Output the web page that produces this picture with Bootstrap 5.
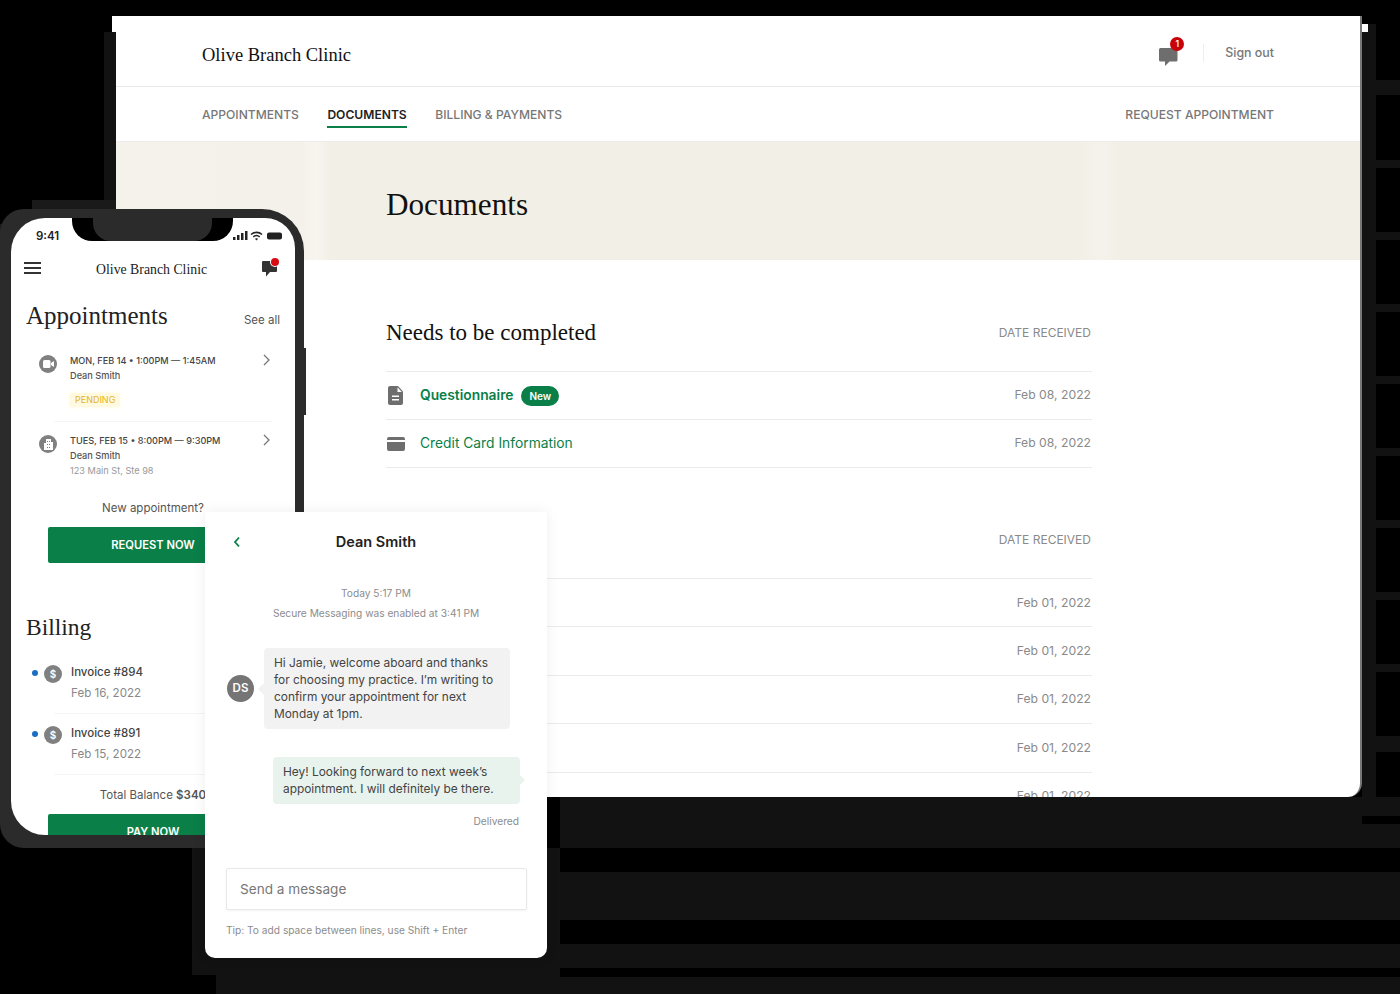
<!DOCTYPE html>
<html lang="en">
<head>
<meta charset="UTF-8">
<meta name="viewport" content="width=device-width, initial-scale=1.0">
<title>Olive Branch Clinic</title>
<link href="https://cdn.jsdelivr.net/npm/bootstrap@5.3.0/dist/css/bootstrap.min.css" rel="stylesheet">
<style>
    body { margin: 0; background: #000; font-family: Inter, "Liberation Sans", sans-serif; color: #444; overflow: hidden; }
    .stage { position: relative; width: 1400px; height: 994px; overflow: hidden; }
    .serif { font-family: "Liberation Serif", serif; font-weight: 400; color: #111; }

    /* backdrop: the banded drop shadow of the source image */
    .shade { position: absolute; background: #121212; }
    .shade-bands { left: 560px; top: 797px; width: 840px; height: 197px; background: linear-gradient(to bottom, #121212 0 51px, #000 51px 75px, #121212 75px 123px, #000 123px 147px, #121212 147px 171px, #000 171px 180px, #121212 180px); }
    .shade-chat { left: 192px; top: 848px; width: 368px; height: 127px; }
    .shade-chat-low { left: 216px; top: 975px; width: 344px; height: 19px; }
    .shade-right { left: 1362px; top: 24px; width: 14px; height: 784px; }
    .shade-tick-top { left: 1376px; top: 80px; width: 24px; height: 15px; }
    .shade-ticks { left: 1376px; top: 160px; width: 24px; height: 584px; background: repeating-linear-gradient(to bottom, #121212 0 8px, #000 8px 72px); }
    .shade-tick-last { left: 1376px; top: 744px; width: 24px; height: 8px; }
    .shade-ticks-low { left: 1362px; top: 797px; width: 38px; height: 51px; background: linear-gradient(to bottom, #121212 0 19px, #000 19px 27px, #121212 27px); }
    .shade-left { left: 104px; top: 32px; width: 12px; height: 180px; }
    .shade-phone { left: 0; top: 200px; width: 120px; height: 40px; background: #1a1a1a; clip-path: polygon(32px 0, 120px 0, 120px 40px, 0 40px, 0 24px, 8px 24px, 8px 16px, 32px 16px); }
    .desk-nub-l { position: absolute; left: 112px; top: 16px; width: 6px; height: 16px; background: #fff; }
    .desk-nub-r { position: absolute; left: 1360px; top: 24px; width: 8px; height: 8px; background: #fff; }

    /* desktop window */
    .desk { position: absolute; left: 116px; top: 16px; width: 1246px; height: 781px; background: #fff; overflow: hidden; border-right: 2px solid #777; border-bottom-right-radius: 14px; }
    .desk-head { height: 71px; padding: 2px 86px 0 86px; border-bottom: 1px solid #e9e9e9; }
    .desk-logo { font-size: 18.5px; margin-top: 7px; }
    .head-tools { margin-top: 2px; }
    .sign-out { font-size: 12.4px; font-weight: 500; color: #777; margin-left: 1px; }
    .head-rule { width: 1px; height: 18px; background: #eee; margin: 0 20px 0 24px; }
    .msg-wrap { position: relative; width: 20px; height: 22px; }
    .msg-count { position: absolute; left: 11px; top: -5px; width: 14px; height: 14px; border-radius: 50%; background: #c8000a; color: #fff; font-size: 8.5px; line-height: 14px; text-align: center; font-weight: 600; }
    .desk-nav { height: 55px; padding: 0 86px 0 86px; border-bottom: 1px solid #ececec; gap: 28.5px; }
    .desk-nav a { font-size: 12.1px; font-weight: 500; color: #777; text-decoration: none; text-transform: uppercase; line-height: 22px; padding-top: 2px; }
    .desk-nav a.on { color: #222; font-weight: 600; box-shadow: 0 2px 0 #0a7f48; }
    .banner { height: 118px; padding: 7px 0 0 270px; background: linear-gradient(90deg, #f5f2ec 0, #f4f1ea 185px, #f7f5ef 200px, #f2efe6 215px, #f2efe6 960px, #f4f2eb 985px, #f2efe6 1005px); }
    .banner h1 { font-size: 31.2px; margin: 0; }
    .doc-area { padding: 0 0 0 270px; width: 976px; }
    .doc-head { font-size: 12px; color: #8a8a8a; text-transform: uppercase; padding-right: 1px; }
    .doc-title { font-size: 23px; margin: 0; }
    .doc-top { height: 111px; padding-top: 35px; }
    .doc-mid { height: 110px; padding-top: 34px; }
    .doc-list { border-top: 1px solid #ebebeb; }
    .doc-row { height: 48.4px; border-bottom: 1px solid #ebebeb; font-size: 12.2px; color: #8a8a8a; padding-right: 1px; }
    .doc-row.first-set { height: 48px; }
    .doc-link { font-size: 13.8px; color: #0a7f48; text-decoration: none; }
    .doc-link.fw { font-weight: 600; }
    .pill-new { background: #0a7f48; font-size: 10px; font-weight: 600; padding: 5px 8px; }
    .doc-ico { width: 34px; padding-left: 1px; }
    .doc-ico svg.file-ico { margin-left: 1px; }

    /* phone */
    .phone { position: absolute; left: 0; top: 209px; width: 304px; height: 639px; background: #2b2b2b; border-radius: 24px 42px 0 24px; padding: 9px 9px 13px 11px; }
    .phone-key { position: absolute; left: 304px; top: 348px; width: 2px; height: 67px; background: #2b2b2b; }
    .screen { position: relative; height: 100%; background: #fff; border-radius: 34px 30px 0 34px; overflow: hidden; padding: 0 15px; }
    .notch { position: absolute; left: 61px; top: 0; width: 161px; height: 23px; background: #000; border-radius: 0 0 20px 20px; }
    .notch i { display: block; margin-left: 21px; width: 119px; height: 23px; background: #2b2b2b; border-radius: 0 0 18px 18px; }
    .status { height: 34px; padding: 10px 0 0 10px; font-size: 11.5px; font-weight: 600; color: #222; }
    .signal { margin: 2px -3px 0 0; }
    .top-bar { height: 32px; }
    .burger { width: 17px; margin-left: -2px; }
    .burger i { display: block; height: 2px; background: #333; margin-bottom: 3px; }
    .phone-logo { font-size: 13.8px; color: #222; margin: 4px 0 0 55px; }
    .msg-dot { position: relative; width: 16px; height: 16px; margin-right: 2px; }
    .msg-dot b { position: absolute; left: 9px; top: -2px; width: 8px; height: 8px; border-radius: 50%; background: #d80c14; box-shadow: 0 0 0 1px #fff; }
    .phone-h2 { font-size: 25px; line-height: 32px; margin: 0; color: #222; }
    .phone-h2.billing { font-size: 23.5px; margin-top: 48px; }
    .see-all { font-size: 11.5px; color: #555; padding-bottom: 3px; }
    .round-ico { flex: none; width: 18px; height: 18px; border-radius: 50%; background: #808080; color: #fff; font-size: 10px; font-weight: 600; }
    .appt-ico { margin: 2px 8px 0 0; }
    .appt-row { padding-left: 13px; padding-right: 9px; }
    .appt-row.one { margin-top: 21px; }
    .appt-row.two { margin-top: 11px; }
    .appt-text { padding-left: 5px; }
    .appt-time { font-size: 9.15px; font-weight: 500; color: #444; line-height: 15px; }
    .appt-name { font-size: 9.2px; font-weight: 500; color: #555; line-height: 15px; }
    .appt-addr { font-size: 9.2px; color: #999; line-height: 15px; }
    .appt-chev { margin-top: 1px; }
    .tag-pending { display: inline-block; margin-top: 10px; font-size: 9px; line-height: 14px; padding: 0 5px; color: #e6b422; background: #fffadf; box-shadow: 0 0 4px #fffadf; }
    .soft-line { height: 1px; background: #f5f5f5; margin: 12px 8px 0 28px; }
    .phone-note { font-size: 11.5px; color: #555; text-align: center; width: 254px; }
    .note-new { margin-top: 22px; }
    .note-total { margin-top: 12px; }
    .btn-clinic { display: block; width: 210px; margin: 10px 0 0 22px; background: #0a7f48; color: #fff; font-size: 11.2px; font-weight: 600; border: 0; border-radius: 2px; height: 36px; line-height: 36px; padding: 0; text-align: center; }
    .btn-clinic.pay { margin-top: 9px; }
    .inv-row { margin-left: 6px; }
    .inv-row.one { margin-top: 21px; }
    .inv-row.two { margin-top: 11px; }
    .blue-dot { flex: none; width: 6px; height: 6px; border-radius: 50%; background: #1a6fc4; margin: 6px 6px 0 0; }
    .inv-ico { margin: 1px 9px 0 0; }
    .inv-name { font-size: 11.5px; font-weight: 500; color: #444; line-height: 16px; }
    .inv-date { font-size: 11.6px; color: #888; line-height: 16px; margin-top: 5px; }

    /* chat */
    .chat { position: absolute; left: 205px; top: 512px; width: 342px; height: 446px; background: #fff; border-radius: 3px 3px 10px 10px; box-shadow: 0 0 14px rgba(0,0,0,.07); display: flex; flex-direction: column; }
    .chat-head { height: 60px; flex: none; position: relative; font-size: 14.5px; font-weight: 600; color: #222; }
    .chat-back { position: absolute; left: 28px; top: 24px; }
    .chat-meta { font-size: 10.2px; color: #8c8c8c; line-height: 14px; }
    .meta-today { margin-top: 14px; }
    .meta-secure { margin-top: 6px; }
    .meta-delivered { margin: 10px 28px 0 0; }
    .meta-tip { margin: 13px 0 21px 21px; }
    .bubble { position: relative; font-size: 11.9px; line-height: 17px; color: #444; border-radius: 4px; margin-top: 28px; }
    .bubble-in { width: 246px; margin-left: 59px; background: #f2f2f2; padding: 5.5px 10px 7px; }
    .bubble-in::before { content: ""; position: absolute; left: -6px; top: 35px; border: 6px solid transparent; border-left: 0; border-right-color: #f2f2f2; }
    .bubble-out { width: 247px; margin-left: 68px; background: #e8f3ed; padding: 6.5px 10px 6.5px; }
    .bubble-out::after { content: ""; position: absolute; right: -5px; top: 17px; border: 6px solid transparent; border-right: 0; border-left-color: #e8f3ed; }
    .avatar { position: absolute; left: 22px; top: 103px; width: 27px; height: 27px; border-radius: 50%; background: #757575; color: #fff; font-size: 11.5px; font-weight: 600; }
    .chat-input { width: 301px; height: 42px; margin-left: 21px; border: 1px solid #e8e8e8; border-radius: 2px; padding: 0 13px; font-size: 13.6px; box-shadow: 0 1px 3px rgba(0,0,0,.05); }
    .chat-input::placeholder { color: #777; }
</style>
</head>
<body>
<div class="stage">
    <!-- backdrop -->
    <div class="shade shade-bands"></div>
    <div class="shade shade-chat"></div>
    <div class="shade shade-chat-low"></div>
    <div class="shade shade-right"></div>
    <div class="shade shade-tick-top"></div>
    <div class="shade shade-ticks"></div>
    <div class="shade shade-tick-last"></div>
    <div class="shade shade-ticks-low"></div>
    <div class="shade shade-left"></div>
    <div class="shade shade-phone"></div>
    <div class="desk-nub-l"></div>
    <div class="desk-nub-r"></div>

    <!-- Desktop window -->
    <div class="desk">
        <div class="desk-head d-flex align-items-center justify-content-between">
            <div class="serif desk-logo">Olive Branch Clinic</div>
            <div class="head-tools d-flex align-items-center">
                <div class="msg-wrap">
                    <svg width="20" height="22" viewBox="0 0 20 22"><path fill="#6e6e6e" d="M1.500 3h15.500a1.500 1.500 0 0 1 1.500 1.500V15a1.500 1.500 0 0 1-1.500 1.500H10.500L6 21v-4.500H1.500A1.500 1.500 0 0 1 0 15V4.500A1.500 1.500 0 0 1 1.500 3z"/></svg>
                    <span class="msg-count">1</span>
                </div>
                <span class="head-rule"></span>
                <span class="sign-out">Sign out</span>
            </div>
        </div>
        <nav class="desk-nav d-flex align-items-center">
            <a href="#">Appointments</a>
            <a href="#" class="on">Documents</a>
            <a href="#">Billing &amp; Payments</a>
            <a href="#" class="ms-auto">Request Appointment</a>
        </nav>
        <div class="banner d-flex align-items-center">
            <h1 class="serif">Documents</h1>
        </div>
        <div class="doc-area">
            <div class="doc-top d-flex align-items-center justify-content-between">
                <h2 class="serif doc-title">Needs to be completed</h2>
                <span class="doc-head">Date received</span>
            </div>
            <div class="doc-list">
                <div class="doc-row first-set d-flex align-items-center justify-content-between">
                    <div class="d-flex align-items-center">
                        <span class="doc-ico">
                            <svg width="16" height="19" viewBox="0 0 16 19" class="d-block file-ico"><path fill="#6e6e6e" d="M2 0h8l5 5.500V17a2 2 0 0 1-2 2H2a2 2 0 0 1-2-2V2a2 2 0 0 1 2-2z"/><path fill="#fff" d="M9.500 1.200V6h4.300zM4 9.500h7v1.500H4zM4 13h7v1.500H4z"/></svg>
                        </span>
                        <a href="#" class="doc-link fw">Questionnaire</a>
                        <span class="badge rounded-pill pill-new ms-2">New</span>
                    </div>
                    <span>Feb 08, 2022</span>
                </div>
                <div class="doc-row first-set d-flex align-items-center justify-content-between">
                    <div class="d-flex align-items-center">
                        <span class="doc-ico">
                            <svg width="18" height="14" viewBox="0 0 18 14" class="d-block"><path fill="#6e6e6e" d="M2 0h14a2 2 0 0 1 2 2v10a2 2 0 0 1-2 2H2a2 2 0 0 1-2-2V2a2 2 0 0 1 2-2z"/><path fill="#fff" d="M0 3h18v2H0z"/></svg>
                        </span>
                        <a href="#" class="doc-link">Credit Card Information</a>
                    </div>
                    <span>Feb 08, 2022</span>
                </div>
            </div>
            <div class="doc-mid d-flex align-items-center justify-content-end">
                <span class="doc-head">Date received</span>
            </div>
            <div class="doc-list">
                <div class="doc-row d-flex align-items-center justify-content-end"><span>Feb 01, 2022</span></div>
                <div class="doc-row d-flex align-items-center justify-content-end"><span>Feb 01, 2022</span></div>
                <div class="doc-row d-flex align-items-center justify-content-end"><span>Feb 01, 2022</span></div>
                <div class="doc-row d-flex align-items-center justify-content-end"><span>Feb 01, 2022</span></div>
                <div class="doc-row d-flex align-items-center justify-content-end"><span>Feb 01, 2022</span></div>
            </div>
        </div>
    </div>

    <!-- Phone -->
    <div class="phone-key"></div>
    <div class="phone">
        <div class="screen">
            <div class="notch"><i></i></div>
            <div class="status d-flex justify-content-between">
                <span>9:41</span>
                <svg class="signal" width="50" height="12" viewBox="0 0 50 12">
                    <path fill="#222" d="M0 7h2.500v3H0zM4 5h2.500v5H4zM8 3h2.500v7H8zM12 1h2.500v9H12z"/>
                    <path fill="none" stroke="#222" stroke-width="1.600" d="M18 4.500c3-2.800 8-2.800 11 0M20.300 6.800c1.800-1.500 4.600-1.500 6.400 0"/>
                    <path fill="#222" d="M23.500 10.500l-1.600-1.800c1-.7 2.200-.7 3.200 0z"/>
                    <rect x="34" y="2.500" width="15" height="7" rx="2" fill="#222"/>
                </svg>
            </div>
            <div class="top-bar d-flex align-items-center">
                <div class="burger"><i></i><i></i><i class="mb-0"></i></div>
                <div class="serif phone-logo flex-grow-1">Olive Branch Clinic</div>
                <div class="msg-dot">
                    <svg width="16" height="17" viewBox="0 0 16 17" class="d-block"><path fill="#333" d="M1 1h13a1 1 0 0 1 1 1v9a1 1 0 0 1-1 1H8l-4 4.500V12H1a1 1 0 0 1-1-1V2a1 1 0 0 1 1-1z"/></svg>
                    <b></b>
                </div>
            </div>
            <div class="d-flex align-items-end justify-content-between mt-3">
                <h2 class="serif phone-h2">Appointments</h2>
                <a class="see-all text-decoration-none" href="#">See all</a>
            </div>
            <div class="appt-row one d-flex">
                <span class="round-ico appt-ico d-flex align-items-center justify-content-center">
                    <svg width="11" height="8" viewBox="0 0 11 8"><rect width="7.500" height="8" rx="1.500" fill="#fff"/><path fill="#fff" d="M8 3l3-2v6L8 5z"/></svg>
                </span>
                <div class="flex-grow-1 appt-text">
                    <div class="appt-time">MON, FEB 14 • 1:00PM — 1:45AM</div>
                    <div class="appt-name">Dean Smith</div>
                    <span class="tag-pending">PENDING</span>
                </div>
                <svg class="appt-chev" width="8" height="12" viewBox="0 0 8 12"><path fill="none" stroke="#777" stroke-width="1.300" d="M1 1l5 5-5 5"/></svg>
            </div>
            <div class="soft-line"></div>
            <div class="appt-row two d-flex">
                <span class="round-ico appt-ico d-flex align-items-center justify-content-center">
                    <svg width="9" height="11" viewBox="0 0 9 11"><path fill="#fff" d="M2 0h5v3h2v8H0V4h2z"/><path fill="#808080" d="M3 2h1v1H3zM5 2h1v1H5zM3 5h1v1H3zM5 5h1v1H5zM3 8h1v1H3zM5 8h1v1H5z"/></svg>
                </span>
                <div class="flex-grow-1 appt-text">
                    <div class="appt-time">TUES, FEB 15 • 8:00PM — 9:30PM</div>
                    <div class="appt-name">Dean Smith</div>
                    <div class="appt-addr">123 Main St, Ste 98</div>
                </div>
                <svg class="appt-chev" width="8" height="12" viewBox="0 0 8 12"><path fill="none" stroke="#777" stroke-width="1.300" d="M1 1l5 5-5 5"/></svg>
            </div>
            <div class="phone-note note-new">New appointment?</div>
            <a href="#" class="btn btn-clinic">REQUEST NOW</a>
            <h2 class="serif phone-h2 billing">Billing</h2>
            <div class="inv-row one d-flex">
                <span class="blue-dot"></span>
                <span class="round-ico inv-ico d-flex align-items-center justify-content-center">$</span>
                <div>
                    <div class="inv-name">Invoice #894</div>
                    <div class="inv-date">Feb 16, 2022</div>
                </div>
            </div>
            <div class="soft-line"></div>
            <div class="inv-row two d-flex">
                <span class="blue-dot"></span>
                <span class="round-ico inv-ico d-flex align-items-center justify-content-center">$</span>
                <div>
                    <div class="inv-name">Invoice #891</div>
                    <div class="inv-date">Feb 15, 2022</div>
                </div>
            </div>
            <div class="soft-line"></div>
            <div class="phone-note note-total">Total Balance <b class="fw-semibold">$340</b></div>
            <a href="#" class="btn btn-clinic pay">PAY NOW</a>
        </div>
    </div>

    <!-- Chat window -->
    <div class="chat">
        <div class="chat-head d-flex align-items-center justify-content-center">
            <svg class="chat-back" width="8" height="12" viewBox="0 0 8 12"><path fill="none" stroke="#0a7f48" stroke-width="1.800" d="M6 1.500L2 6l4 4.500"/></svg>
            Dean Smith
        </div>
        <div class="position-relative flex-grow-1">
            <div class="chat-meta meta-today text-center">Today 5:17 PM</div>
            <div class="chat-meta meta-secure text-center">Secure Messaging was enabled at 3:41 PM</div>
            <div class="bubble bubble-in">Hi Jamie, welcome aboard and thanks for choosing my practice. I’m writing to confirm your appointment for next Monday at 1pm.</div>
            <span class="avatar d-flex align-items-center justify-content-center">DS</span>
            <div class="bubble bubble-out">Hey! Looking forward to next week’s appointment. I will definitely be there.</div>
            <div class="chat-meta meta-delivered text-end">Delivered</div>
        </div>
        <input class="form-control chat-input" type="text" placeholder="Send a message">
        <div class="chat-meta meta-tip">Tip: To add space between lines, use Shift + Enter</div>
    </div>
</div>
<script src="https://cdn.jsdelivr.net/npm/bootstrap@5.3.0/dist/js/bootstrap.bundle.min.js"></script>
</body>
</html>
